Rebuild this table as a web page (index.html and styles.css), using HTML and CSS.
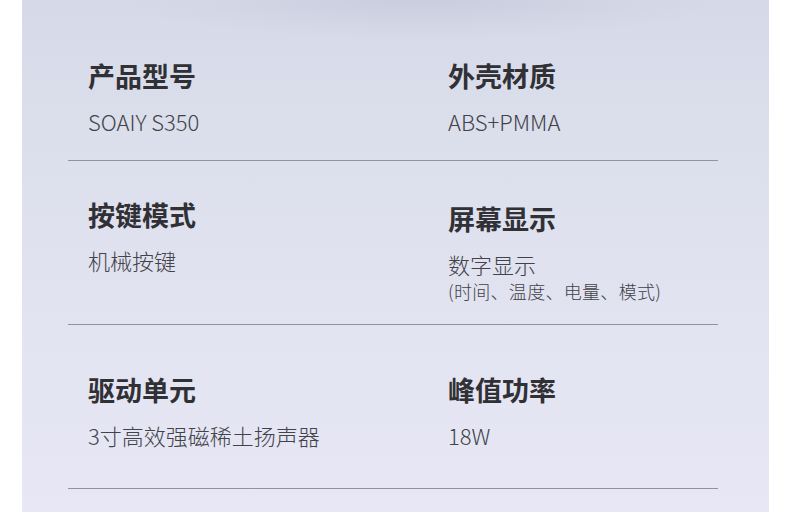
FILE: index.html
```html
<!DOCTYPE html>
<html lang="zh-CN">
<head>
<meta charset="utf-8">
<title>产品参数</title>
<link rel="stylesheet" href="styles.css">
</head>
<body>
<div class="panel">
  <div class="specs">
    <div class="row row-1">
      <div class="cell">
        <div class="label">产品型号</div>
        <div class="value">SOAIY S350</div>
      </div>
      <div class="cell">
        <div class="label">外壳材质</div>
        <div class="value">ABS+PMMA</div>
      </div>
    </div>
    <div class="row row-2">
      <div class="cell">
        <div class="label">按键模式</div>
        <div class="value">机械按键</div>
      </div>
      <div class="cell cell-shift">
        <div class="label">屏幕显示</div>
        <div class="value">数字显示</div>
        <div class="note">(时间、温度、电量、模式)</div>
      </div>
    </div>
    <div class="row row-3">
      <div class="cell">
        <div class="label">驱动单元</div>
        <div class="value">3寸高效强磁稀土扬声器</div>
      </div>
      <div class="cell">
        <div class="label">峰值功率</div>
        <div class="value">18W</div>
      </div>
    </div>
  </div>
</div>
</body>
</html>
```

FILE: styles.css
```css
html, body {
  margin: 0;
  padding: 0;
  background: #ffffff;
}

body {
  font-family: "Noto Sans CJK SC", "Noto Sans", sans-serif;
  color: #333338;
}

.panel {
  margin-left: 22px;
  width: 747px;
  height: 512px;
  background:
    radial-gradient(ellipse 300px 40px at 400px 0px, rgba(190, 196, 215, 0.55), rgba(190, 196, 215, 0) 100%),
    linear-gradient(180deg, #d6dae8 0%, #dcdfec 30%, #e2e3f1 60%, #e7e7f5 100%);
  overflow: hidden;
}

.specs {
  margin-left: 46px;
  width: 650px;
}

.row {
  display: grid;
  grid-template-columns: 360px 1fr;
  padding-left: 20px;
  border-bottom: 1px solid #92939e;
  box-sizing: border-box;
}

.row-1 {
  height: 161px;
  padding-top: 58px;
}

.row-2 {
  height: 164px;
  padding-top: 36px;
}

.row-3 {
  height: 164px;
  padding-top: 47px;
}

.cell {
  display: flex;
  flex-direction: column;
}

.cell-shift {
  padding-top: 4px;
}

.label {
  font-size: 27px;
  line-height: 36px;
  font-weight: 700;
  color: #303035;
}

.value {
  margin-top: 12px;
  font-size: 22px;
  line-height: 30px;
  font-weight: 300;
  color: #424248;
}

.note {
  font-size: 18px;
  line-height: 24px;
  font-weight: 300;
  color: #424248;
  letter-spacing: 0.3px;
}
```
